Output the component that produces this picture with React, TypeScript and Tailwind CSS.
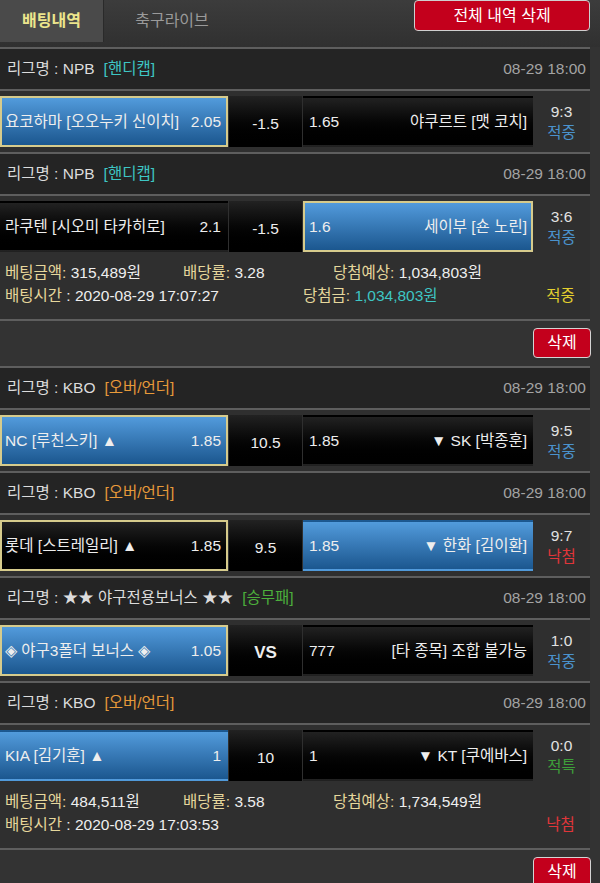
import React from "react";

type Side = { name: string; odds: string; blue?: boolean; sel?: boolean };
type Game = {
  league: string;
  tag: string;
  tagColor: string;
  home: Side;
  mid: string;
  away: Side;
  score: string;
  result: string;
  resultColor: string;
};
type Bet = {
  games: Game[];
  amount: string;
  rate: string;
  expect: string;
  time: string;
  win?: string;
  result: string;
  resultColor: string;
};

const CYAN = "text-[#3ec6c4]";
const ORANGE = "text-[#e89a3a]";
const GREEN = "text-[#4caf3c]";

const bets: Bet[] = [
  {
    games: [
      {
        league: "NPB",
        tag: "[핸디캡]",
        tagColor: CYAN,
        home: { name: "요코하마 [오오누키 신이치]", odds: "2.05", blue: true, sel: true },
        mid: "-1.5",
        away: { name: "야쿠르트 [맷 코치]", odds: "1.65" },
        score: "9:3",
        result: "적중",
        resultColor: "text-[#4a92cc]",
      },
      {
        league: "NPB",
        tag: "[핸디캡]",
        tagColor: CYAN,
        home: { name: "라쿠텐 [시오미 타카히로]", odds: "2.1" },
        mid: "-1.5",
        away: { name: "세이부 [숀 노린]", odds: "1.6", blue: true, sel: true },
        score: "3:6",
        result: "적중",
        resultColor: "text-[#4a92cc]",
      },
    ],
    amount: "315,489원",
    rate: "3.28",
    expect: "1,034,803원",
    time: "2020-08-29 17:07:27",
    win: "1,034,803원",
    result: "적중",
    resultColor: "text-[#e3cf2e]",
  },
  {
    games: [
      {
        league: "KBO",
        tag: "[오버/언더]",
        tagColor: ORANGE,
        home: { name: "NC [루친스키] ▲", odds: "1.85", blue: true, sel: true },
        mid: "10.5",
        away: { name: "▼ SK [박종훈]", odds: "1.85" },
        score: "9:5",
        result: "적중",
        resultColor: "text-[#4a92cc]",
      },
      {
        league: "KBO",
        tag: "[오버/언더]",
        tagColor: ORANGE,
        home: { name: "롯데 [스트레일리] ▲", odds: "1.85", sel: true },
        mid: "9.5",
        away: { name: "▼ 한화 [김이환]", odds: "1.85", blue: true },
        score: "9:7",
        result: "낙첨",
        resultColor: "text-[#e0363a]",
      },
      {
        league: "★★ 야구전용보너스 ★★",
        tag: "[승무패]",
        tagColor: GREEN,
        home: { name: "◈ 야구3폴더 보너스 ◈", odds: "1.05", blue: true, sel: true },
        mid: "VS",
        away: { name: "[타 종목] 조합 불가능", odds: "777" },
        score: "1:0",
        result: "적중",
        resultColor: "text-[#4a92cc]",
      },
      {
        league: "KBO",
        tag: "[오버/언더]",
        tagColor: ORANGE,
        home: { name: "KIA [김기훈] ▲", odds: "1", blue: true },
        mid: "10",
        away: { name: "▼ KT [쿠에바스]", odds: "1" },
        score: "0:0",
        result: "적특",
        resultColor: "text-[#3e9e3a]",
      },
    ],
    amount: "484,511원",
    rate: "3.58",
    expect: "1,734,549원",
    time: "2020-08-29 17:03:53",
    result: "낙첨",
    resultColor: "text-[#e0363a]",
  },
];

function cellBg(s: Side) {
  const bg = s.blue
    ? "bg-linear-to-b from-[#529bdc] to-[#1b578f]"
    : "bg-linear-to-b from-[#222222] to-[#000000]";
  const bd = s.sel ? "border-2 border-[#d6cb8c]" : "border-2 border-transparent";
  return `${bg} ${bd}`;
}

function GameRows({ g }: { g: Game }) {
  return (
    <>
      <div className="h-[42px] border-t-2 border-[#5e5e5e] bg-[#242424] flex items-center justify-between pl-[7px] pr-[4px]">
        <div className="text-[#dcdcdc]">
          리그명 : {g.league}
          <span className={`ml-[9px] ${g.tagColor}`}>{g.tag}</span>
        </div>
        <div className="text-[#a3a3a3]">08-29 18:00</div>
      </div>
      <div className="h-[63px] border-t-2 border-[#5e5e5e] bg-[#2f2f2f] flex pt-[5px] pb-[5px]">
        <div className={`w-[228px] flex items-center justify-between pl-[3px] pr-[5px] text-[#eeeeee] ${cellBg(g.home)}`}>
          <span>{g.home.name}</span>
          <span>{g.home.odds}</span>
        </div>
        <div
          className={`w-[73px] ml-px flex items-center justify-center pt-[5px] bg-linear-to-b from-[#222222] to-[#000000] text-[#eeeeee] ${
            g.mid === "VS" ? "font-bold text-[17px]" : ""
          }`}
        >
          {g.mid}
        </div>
        <div className={`w-[230px] ml-px flex items-center justify-between pl-[4px] pr-[4px] text-[#eeeeee] ${cellBg(g.away)}`}>
          <span>{g.away.odds}</span>
          <span>{g.away.name}</span>
        </div>
        <div className="flex-1 flex flex-col items-center justify-center leading-[21px]">
          <span className="text-[#e2e2e2]">{g.score}</span>
          <span className={g.resultColor}>{g.result}</span>
        </div>
      </div>
    </>
  );
}

function DeleteBar() {
  return (
    <div className="h-[47px] border-t-2 border-[#5e5e5e] flex items-start justify-end pt-[7px]">
      <button className="w-[58px] h-[30px] rounded-[4px] border border-[#d4d4d4] bg-[#c3001c] text-white text-[16px] mr-[-1px]">
        삭제
      </button>
    </div>
  );
}

function BetBlock({ b }: { b: Bet }) {
  return (
    <>
      {b.games.map((g, i) => (
        <GameRows key={i} g={g} />
      ))}
      <div className="bg-[#2f2f2f] pl-[5px] pt-[4px] pb-[12px] leading-[23px]">
        <div className="flex">
          <span className="w-[178px]">
            <span className="text-[#e6d79c]">베팅금액:</span>
            <span className="text-[#eeeeee]"> {b.amount}</span>
          </span>
          <span className="w-[150px]">
            <span className="text-[#e6d79c]">배당률:</span>
            <span className="text-[#eeeeee]"> {b.rate}</span>
          </span>
          <span>
            <span className="text-[#e6d79c]">당첨예상:</span>
            <span className="text-[#eeeeee]"> {b.expect}</span>
          </span>
        </div>
        <div className="flex">
          <span className="w-[298px]">
            <span className="text-[#e6d79c]">배팅시간</span>
            <span className="text-[#eeeeee]"> : {b.time}</span>
          </span>
          <span className="flex-1">
            {b.win && (
              <>
                <span className="text-[#e6d79c]">당첨금:</span>
                <span className="text-[#3ec6c4]"> {b.win}</span>
              </>
            )}
          </span>
          <span className={`w-[59px] text-center ${b.resultColor}`}>{b.result}</span>
        </div>
      </div>
      <DeleteBar />
    </>
  );
}

export default function App() {
  return (
    <div
      className="w-[600px] h-[883px] overflow-hidden bg-[#333333] text-[15.5px]"
      style={{ fontFamily: '"Liberation Sans", "Noto Sans CJK KR", sans-serif' }}
    >
      <div className="h-[47px] bg-linear-to-b from-[#3c3c3c] to-[#303030] flex items-start">
        <div className="w-[104px] h-[42px] bg-[#4a4a4a] border-r border-[#2a2a2a] flex items-center justify-center text-[16px] font-semibold text-[#ece58c]">
          배팅내역
        </div>
        <div className="w-[136px] h-[42px] flex items-center justify-center text-[16px] text-[#9a9a9a]">
          축구라이브
        </div>
        <div className="flex-1" />
        <button className="w-[176px] h-[31px] mr-[10px] rounded-[4px] border border-[#cfcfcf] bg-[#c3001c] text-white text-[16px]">
          전체 내역 삭제
        </button>
      </div>
      <div className="w-[590px]">
        {bets.map((b, i) => (
          <BetBlock key={i} b={b} />
        ))}
      </div>
    </div>
  );
}
